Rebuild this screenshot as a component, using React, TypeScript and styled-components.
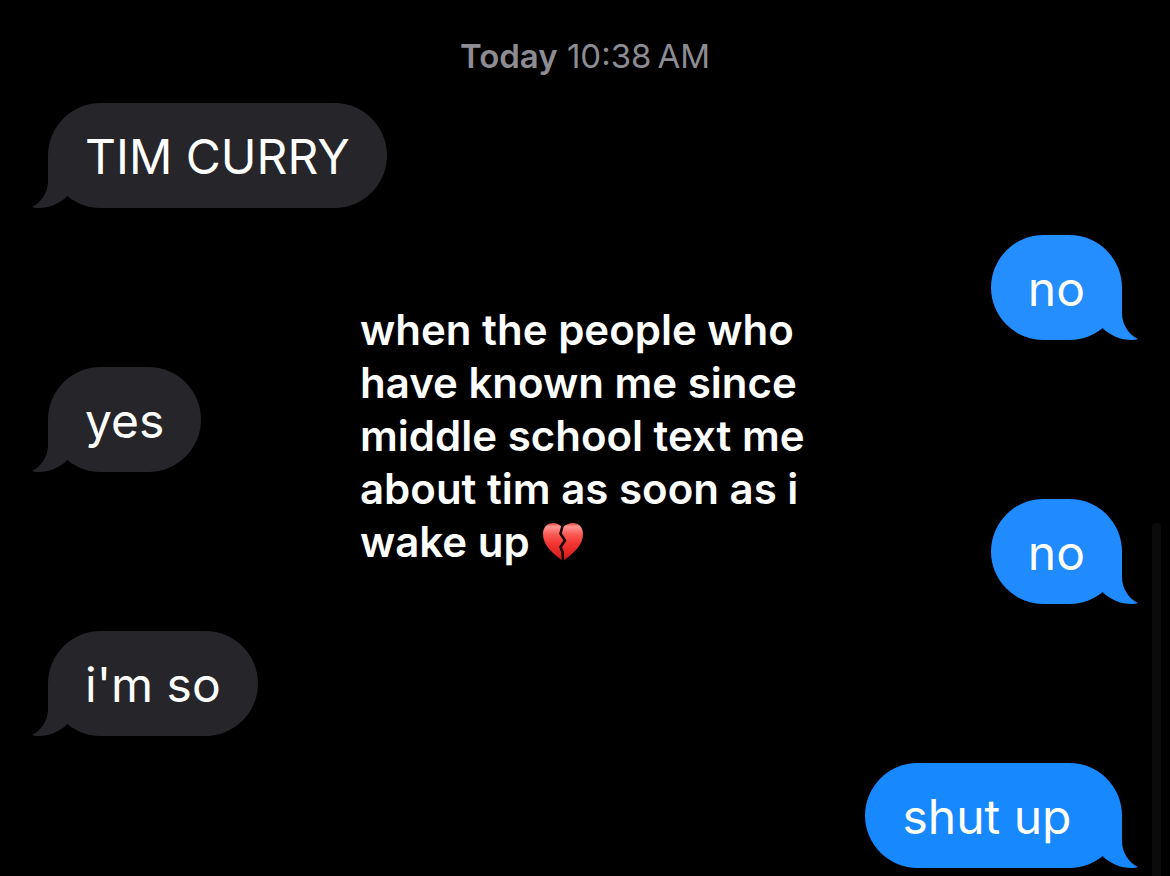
import React from "react";
import styled, { createGlobalStyle } from "styled-components";

const GlobalStyle = createGlobalStyle`
  body {
    margin: 0;
    background: #000;
    color: #fff;
    font-family: Inter, "Liberation Sans", sans-serif;
  }
`;

const Screen = styled.main`
  position: relative;
  box-sizing: border-box;
  min-height: 100vh;
  padding: 36px 48px 8px;
  overflow: hidden;
`;

const DateStamp = styled.header`
  margin-bottom: 27px;
  color: #8c8c92;
  font-size: 33px;
  line-height: 40px;
  text-align: center;
`;

const Day = styled.span`
  font-weight: 600;
`;

const Thread = styled.ol`
  display: flex;
  flex-direction: column;
  gap: 27px;
  margin: 0;
  padding: 0;
  list-style: none;
`;

const Bubble = styled.li<{ $sent: boolean; $color: string }>`
  position: relative;
  box-sizing: border-box;
  align-self: ${(p) => (p.$sent ? "flex-end" : "flex-start")};
  height: 105px;
  padding: 0 37px;
  border-radius: 53px;
  background: ${(p) => p.$color};
  color: #fff;
  font-size: 48px;
  line-height: 107px;
  white-space: pre;
`;

const Tail = styled.svg<{ $sent: boolean }>`
  position: absolute;
  bottom: 0;
  ${(p) => (p.$sent ? "right: -16px; transform: scaleX(-1);" : "left: -16px;")}
`;

const Text = styled.span`
  position: relative;
`;

const Caption = styled.p`
  position: absolute;
  top: 303px;
  left: 360px;
  margin: 0;
  font-size: 42px;
  font-weight: 600;
  line-height: 53px;
  white-space: nowrap;
`;

const CaptionLine = styled.span`
  display: flex;
  align-items: center;
  gap: 12px;
`;

const ScrollThumb = styled.div`
  position: absolute;
  top: 523px;
  right: 9px;
  bottom: 0;
  width: 9px;
  border-radius: 5px 5px 0 0;
  background: #0b0b0b;
`;

type Message = { text: string; sent: boolean; color: string };

const messages: Message[] = [
  { text: "TIM CURRY", sent: false, color: "#26252a" },
  { text: "no", sent: true, color: "#248eff" },
  { text: "yes", sent: false, color: "#26252a" },
  { text: "no", sent: true, color: "#1f8bff" },
  { text: "i'm so", sent: false, color: "#26252a" },
  { text: "shut up ", sent: true, color: "#1888ff" },
];

const captionLines = [
  "when the people who",
  "have known me since",
  "middle school text me",
  "about tim as soon as i",
];

function BrokenHeart() {
  return (
    <svg width="42" height="40" viewBox="0 0 42 40" role="img" aria-label="broken heart">
      <defs>
        <linearGradient id="heartFill" x1="0" y1="0" x2="0" y2="1">
          <stop offset="0" stopColor="#d8423e" />
          <stop offset="0.1" stopColor="#ff9690" />
          <stop offset="0.3" stopColor="#fa5a54" />
          <stop offset="0.55" stopColor="#f23530" />
          <stop offset="1" stopColor="#cf1815" />
        </linearGradient>
      </defs>
      <path
        d="M20.500 5.500C18 2.500 15 1 11 1C5 1 1 5.500 1 12C1 23 10 31 21 39C32 31 41 23 41 12C41 5.500 37 1 31 1C27 1 23.500 2.500 20.500 5.500Z"
        fill="url(#heartFill)"
      />
      <path
        d="M20.500 4L18.500 11.500L23 18.500L18.500 25L20.500 30L21 39"
        fill="none"
        stroke="#120000"
        strokeWidth="2.600"
        strokeLinejoin="round"
      />
    </svg>
  );
}

export default function App() {
  return (
    <Screen>
      <GlobalStyle />
      <DateStamp>
        <Day>Today</Day> 10:38{"\u202f"}AM
      </DateStamp>
      <Thread>
        {messages.map((m, i) => (
          <Bubble key={i} $sent={m.sent} $color={m.color}>
            <Tail $sent={m.sent} width="52" height="52" viewBox="0 0 52 52" aria-hidden="true">
              <path
                d="M16 0V25C16 36 10 46 0 51Q2 52 6 52C18 52 28 47 35 40.400L52 0Z"
                fill={m.color}
              />
            </Tail>
            <Text>{m.text}</Text>
          </Bubble>
        ))}
      </Thread>
      <Caption>
        {captionLines.map((line) => (
          <CaptionLine key={line}>{line}</CaptionLine>
        ))}
        <CaptionLine>
          wake up <BrokenHeart />
        </CaptionLine>
      </Caption>
      <ScrollThumb />
    </Screen>
  );
}
